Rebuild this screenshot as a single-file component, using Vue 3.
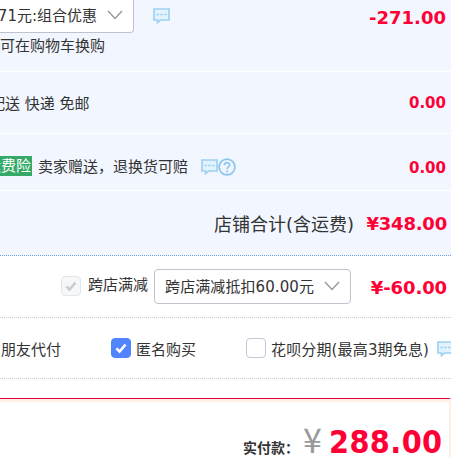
<template>
  <div class="order">
    <section class="shop">
      <div class="row promo">
        <div class="promo-main">
          <div class="select select-promo">
            <span>71元:组合优惠</span>
            <svg class="arrow" viewBox="0 0 16 10"><path d="M1 1l7 7.5L15 1" /></svg>
          </div>
          <p class="tip">可在购物车换购</p>
        </div>
        <svg class="chat" viewBox="0 0 17 16">
          <path d="M1 1h15v11H7.5L4.5 14.5V12H1z" />
          <path class="dots" d="M3.5 6.5h2.5M7.2 6.5h2.5M11 6.5h2.5" />
        </svg>
        <b class="price large">-271.00</b>
      </div>
      <div class="row delivery">
        <span class="label">配送 快递 免邮</span>
        <b class="price">0.00</b>
      </div>
      <div class="row insurance">
        <span class="tag">运费险</span>
        <span class="label">卖家赠送，退换货可赔</span>
        <svg class="chat" viewBox="0 0 17 16">
          <path d="M1 1h15v11H7.5L4.5 14.5V12H1z" />
          <path class="dots" d="M3.5 6.5h2.5M7.2 6.5h2.5M11 6.5h2.5" />
        </svg>
        <svg class="help" viewBox="0 0 18 18">
          <circle cx="9" cy="9" r="7.9" />
          <path d="M6.3 7.2c0-3.5 5.4-3.3 5.4-.3 0 2-2.6 2-2.6 4.3M9.1 12.5v1.9" />
        </svg>
        <b class="price">0.00</b>
      </div>
      <div class="row total">
        <span class="total-label">店铺合计(含运费)</span>
        <b class="price large">¥348.00</b>
      </div>
    </section>

    <section class="options">
      <div class="row cross">
        <span class="checkbox disabled">
          <svg viewBox="0 0 20 20"><path d="M5.5 10.4l3 3.2 6-7" /></svg>
        </span>
        <span class="cross-label">跨店满减</span>
        <div class="select select-cross">
          <span>跨店满减抵扣60.00元</span>
          <svg class="arrow" viewBox="0 0 16 10"><path d="M1 1l7 7.5L15 1" /></svg>
        </div>
        <b class="price large">¥-60.00</b>
      </div>
      <div class="row pay">
        <span class="friend">朋友代付</span>
        <label class="option anonymous" @click="anonymous = !anonymous">
          <span class="checkbox" :class="{ checked: anonymous }">
            <svg v-if="anonymous" viewBox="0 0 20 20"><path d="M5.5 10.4l3 3.2 6-7" /></svg>
          </span>
          <span class="option-text">匿名购买</span>
        </label>
        <label class="option huabei" @click="huabei = !huabei">
          <span class="checkbox" :class="{ checked: huabei }">
            <svg v-if="huabei" viewBox="0 0 20 20"><path d="M5.5 10.4l3 3.2 6-7" /></svg>
          </span>
          <span class="option-text">花呗分期(最高3期免息)</span>
        </label>
        <svg class="chat" viewBox="0 0 17 16">
          <path d="M1 1h15v11H7.5L4.5 14.5V12H1z" />
          <path class="dots" d="M3.5 6.5h2.5M7.2 6.5h2.5M11 6.5h2.5" />
        </svg>
      </div>
    </section>

    <section class="real-pay">
      <span class="real-label">实付款：</span>
      <span class="yen">¥</span>
      <b class="amount">288.00</b>
    </section>
  </div>
</template>

<script setup>
import { ref } from 'vue'

const anonymous = ref(true)
const huabei = ref(false)
</script>

<style>
body {
  margin: 0;
  background: #fff;
}
</style>

<style scoped>
.order {
  width: 451px;
  height: 458px;
  overflow: hidden;
  display: flex;
  flex-direction: column;
  color: #333;
  font-family: 'DejaVu Sans', 'Noto Sans CJK SC', sans-serif;
  font-size: 15px;
  line-height: 20px;
  white-space: nowrap;
}

.row {
  display: flex;
  align-items: center;
  box-sizing: border-box;
}

.shop {
  background: #f1f6ff;
}

.shop .row {
  border-bottom: 1px solid #fff;
}

.promo {
  height: 72px;
}

.promo-main {
  width: 134px;
  height: 72px;
}

.select {
  display: flex;
  align-items: center;
  justify-content: flex-end;
  box-sizing: border-box;
  height: 35px;
  padding-right: 10px;
  border: 1px solid #c2c2ce;
  border-radius: 4px;
  background: #fff;
}

.select-promo {
  height: 33px;
  border-top: 0;
  border-left: 0;
  border-radius: 0 0 4px 0;
}

.select span {
  padding-top: 1px;
}

.arrow {
  flex: none;
  width: 16px;
  height: 10px;
  margin: -2px 0 0 10px;
  fill: none;
  stroke: #999;
  stroke-width: 1.4;
}

.tip {
  margin: 3px 0 0;
}

.chat {
  flex: none;
  width: 17px;
  height: 16px;
  fill: #e3f3fd;
  stroke: #9fd0f2;
  stroke-width: 1.7;
}

.chat .dots {
  stroke-width: 1.5;
}

.promo .chat {
  margin: 0 0 39px 19px;
}

.price {
  margin-left: auto;
  padding-right: 5px;
  color: #ff0036;
  font-size: 15px;
}

.large {
  font-size: 18px;
}

.promo .price {
  margin-bottom: 35px;
}

.delivery {
  height: 62px;
}

.delivery .label {
  margin: 2px 0 0 -10px;
}

.insurance {
  height: 57px;
  padding-top: 10px;
}

.tag {
  margin: -2px 0 0 -15px;
  padding: 0 1px;
  background: #35a968;
  color: #fff;
}

.insurance .label {
  margin-left: 6px;
}

.insurance .chat {
  margin-left: 13px;
}

.help {
  flex: none;
  width: 18px;
  height: 18px;
  fill: none;
  stroke: #8cc6ef;
  stroke-width: 1.7;
}

.insurance .price {
  padding-top: 2px;
}

.shop .total {
  height: 65px;
  border-bottom: 1px dotted #6f9fe8;
}

.total-label {
  margin: 3px 0 0 214px;
  font-size: 18px;
}

.total .price {
  padding: 2px 4px 0 0;
  letter-spacing: -0.2px;
}

.options .row {
  border-bottom: 1px dotted #ccc;
}

.cross {
  height: 62px;
  padding-left: 61px;
}

.cross .disabled {
  margin-top: -1px;
}

.cross-label {
  margin: -4px 0 0 7px;
}

.select-cross {
  width: 197px;
  margin-left: 6px;
}

.select-cross span {
  letter-spacing: 0.08px;
}

.cross .price {
  padding: 2px 4px 0 0;
  letter-spacing: -0.1px;
}

.checkbox {
  flex: none;
  box-sizing: border-box;
  width: 20px;
  height: 20px;
  border: 1px solid #c6c4d6;
  border-radius: 4px;
  background: #fff;
}

.checkbox svg {
  display: block;
  width: 20px;
  height: 20px;
  margin: -1px;
  fill: none;
  stroke: #fff;
  stroke-width: 2.6;
}

.checked {
  border-color: #5185ff;
  background: #5185ff;
}

.disabled {
  border-color: #e3e5e9;
  background: #f6f7f9;
}

.disabled svg {
  stroke: #ccc;
}

.pay {
  height: 61px;
}

.friend {
  width: 60px;
  margin: 3px 0 0 1px;
}

.option {
  display: flex;
  align-items: center;
  gap: 5px;
}

.option-text {
  margin-top: 3px;
}

.anonymous {
  margin-left: 50px;
}

.huabei {
  margin-left: 50px;
}

.huabei .option-text {
  letter-spacing: 0.15px;
}

.pay .chat {
  margin: 2px 0 0 8px;
}

.real-pay {
  flex: 1;
  display: flex;
  align-items: baseline;
  box-sizing: border-box;
  margin-top: 19px;
  padding-left: 243px;
  border-top: 1px solid #e4003c;
  border-right: 2px solid #fff0e5;
  box-shadow: inset 0 3px #fff0e5;
}

.real-label {
  width: 60px;
  font-size: 14px;
  font-weight: bold;
}

.yen {
  width: 26px;
  color: #999;
  font-family: 'Noto Sans CJK SC', sans-serif;
  font-size: 34px;
}

.amount {
  color: #ff0036;
  font-family: 'DejaVu Sans Condensed', 'DejaVu Sans', sans-serif;
  font-size: 32px;
  font-stretch: condensed;
  letter-spacing: 0.4px;
  line-height: 86px;
}
</style>
